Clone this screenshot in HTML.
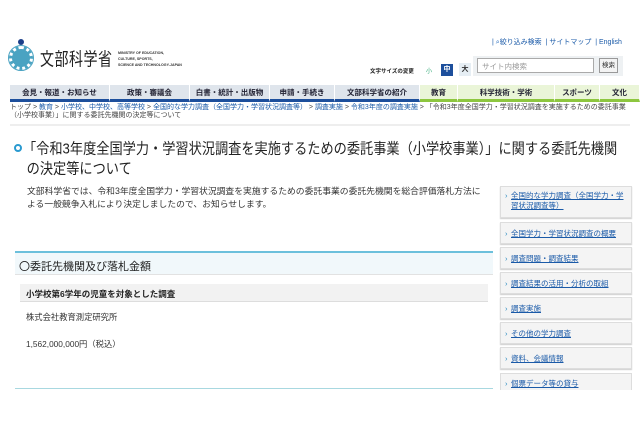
<!DOCTYPE html>
<html><head><meta charset="utf-8">
<style>
*{margin:0;padding:0;box-sizing:border-box}
body{width:640px;height:426px;background:#fff;font-family:"Liberation Sans","Noto Sans CJK JP",sans-serif;position:relative;overflow:hidden;color:#333}
.a{position:absolute;white-space:nowrap}
.nav{position:absolute;top:85px;left:10px;width:630px;height:17px;display:flex;font-size:7.5px;font-weight:bold;color:#223}
.nav div{display:flex;align-items:center;justify-content:center;border-bottom:3px solid #1d4f9c;background:#dfe5ec;border-right:1px solid #fff}
.nav div.g{border-bottom-color:#8dc63f;background:#eaf5d8}
.sb{position:absolute;left:500px;width:132px;background:#f4f4f4;border:1px solid #ddd;box-shadow:0 1px 1px #ccc;font-size:7.5px;color:#1a5aa8;text-decoration:underline;padding:4px 4px 0 10px;line-height:10px;white-space:normal}
.sb:before{content:"›";position:absolute;left:4px;color:#2a8ac0;text-decoration:none}
</style></head><body>
<div class="a" style="left:18px;top:39px;width:6px;height:6px;border-radius:50%;background:#1b3f8a"></div>
<div class="a" style="left:9px;top:46px;width:24px;height:24px;border-radius:50%;background:#4aa3c2;border:3px dotted #fff;outline:1px solid #4aa3c2"></div>
<div class="a" style="left:40px;top:46px;font-size:14px;color:#222;letter-spacing:0.5px;transform:scaleY(1.3);transform-origin:top left">文部科学省</div>
<div class="a" style="left:118px;top:50px;font-size:3.6px;line-height:6px;font-weight:bold;color:#333">MINISTRY OF EDUCATION,<br>CULTURE, SPORTS,<br>SCIENCE AND TECHNOLOGY-JAPAN</div>
<div class="a" style="left:492px;top:37px;font-size:7px;color:#1a5aa8">| <span style="color:#2a6fc0">⌕</span>絞り込み検索 &nbsp;| サイトマップ &nbsp;| English</div>
<div class="a" style="left:370px;top:67px;font-size:5.5px;font-weight:bold;color:#222">文字サイズの変更</div>
<div class="a" style="left:426px;top:66px;font-size:6px;color:#3a7">小</div>
<div class="a" style="left:441px;top:64px;width:12px;height:12px;background:#1d4f9c;color:#fff;font-size:7px;text-align:center;line-height:12px;font-weight:bold">中</div>
<div class="a" style="left:459px;top:63px;width:12px;height:13px;background:#e6eef4;font-size:7px;text-align:center;line-height:13px;font-weight:bold">大</div>
<div class="a" style="left:473px;top:56px;width:150px;height:20px;background:#eef1f3"></div>
<div class="a" style="left:477px;top:58px;width:117px;height:15px;border:1px solid #aaa;background:#fff;font-size:7.5px;color:#999;padding:2px 4px">サイト内検索</div>
<div class="a" style="left:599px;top:58px;width:19px;height:15px;border:1px solid #999;background:#f3f3f3;font-size:6.5px;text-align:center;line-height:13px">検索</div>
<div class="nav">
<div style="width:100px">会見・報道・お知らせ</div>
<div style="width:80px">政策・審議会</div>
<div style="width:80px">白書・統計・出版物</div>
<div style="width:65px">申請・手続き</div>
<div style="width:85px">文部科学省の紹介</div>
<div class="g" style="width:38px">教育</div>
<div class="g" style="width:97px">科学技術・学術</div>
<div class="g" style="width:45px">スポーツ</div>
<div class="g" style="width:40px">文化</div>
</div>
<div class="a" style="left:10px;top:104px;font-size:7px;line-height:8px;color:#444">トップ &gt; <span style="color:#1a5aa8">教育</span> &gt; <span style="color:#1a5aa8">小学校、中学校、高等学校</span> &gt; <span style="color:#1a5aa8">全国的な学力調査（全国学力・学習状況調査等）</span> &gt; <span style="color:#1a5aa8">調査実施</span> &gt; <span style="color:#1a5aa8">令和3年度の調査実施</span> &gt; 「令和3年度全国学力・学習状況調査を実施するための委託事業<br>（小学校事業）」に関する委託先機関の決定等について</div>
<div class="a" style="left:10px;top:124px;width:620px;height:2px;background:#eee"></div>
<div class="a" style="left:14px;top:144px;width:8px;height:8px;border-radius:50%;border:2.5px solid #2a9ad0"></div>
<div class="a" style="left:23px;top:139px;font-size:13.2px;line-height:17.5px;color:#222;transform:scaleY(1.12);transform-origin:top left">「令和3年度全国学力・学習状況調査を実施するための委託事業（小学校事業）」に関する委託先機関<br>&nbsp;の決定等について</div>
<div class="a" style="left:27px;top:185px;font-size:8.8px;line-height:13px;color:#333">文部科学省では、令和3年度全国学力・学習状況調査を実施するための委託事業の委託先機関を総合評価落札方法に<br>よる一般競争入札により決定しましたので、お知らせします。</div>
<div class="a" style="left:15px;top:251px;width:478px;height:24px;background:#f1f8fb;border-top:2px solid #6cc0dc;border-bottom:1px solid #e2e2e2;font-size:11px;padding:5px 4px;color:#222">〇委託先機関及び落札金額</div>
<div class="a" style="left:20px;top:284px;width:468px;height:18px;background:#f2f2f2;border-bottom:1px solid #ddd;font-size:8.5px;font-weight:bold;padding:4px 6px;color:#222">小学校第6学年の児童を対象とした調査</div>
<div class="a" style="left:26px;top:311px;font-size:8.3px;color:#333">株式会社教育測定研究所</div>
<div class="a" style="left:26px;top:338px;font-size:8.3px;color:#333">1,562,000,000円（税込）</div>
<div class="a" style="left:15px;top:388px;width:478px;height:1px;background:#a8d8e0"></div>
<div class="sb" style="top:186px;height:32px">全国的な学力調査（全国学力・学習状況調査等）</div>
<div class="sb" style="top:222px;height:22px;padding-top:6px">全国学力・学習状況調査の概要</div>
<div class="sb" style="top:247px;height:22px;padding-top:6px">調査問題・調査結果</div>
<div class="sb" style="top:272px;height:22px;padding-top:6px">調査結果の活用・分析の取組</div>
<div class="sb" style="top:297px;height:22px;padding-top:6px">調査実施</div>
<div class="sb" style="top:322px;height:22px;padding-top:6px">その他の学力調査</div>
<div class="sb" style="top:347px;height:22px;padding-top:6px">資料、会議情報</div>
<div class="sb" style="top:373px;height:17px;padding-top:5px;border-bottom:none;box-shadow:none">個票データ等の貸与</div>
</body></html>
